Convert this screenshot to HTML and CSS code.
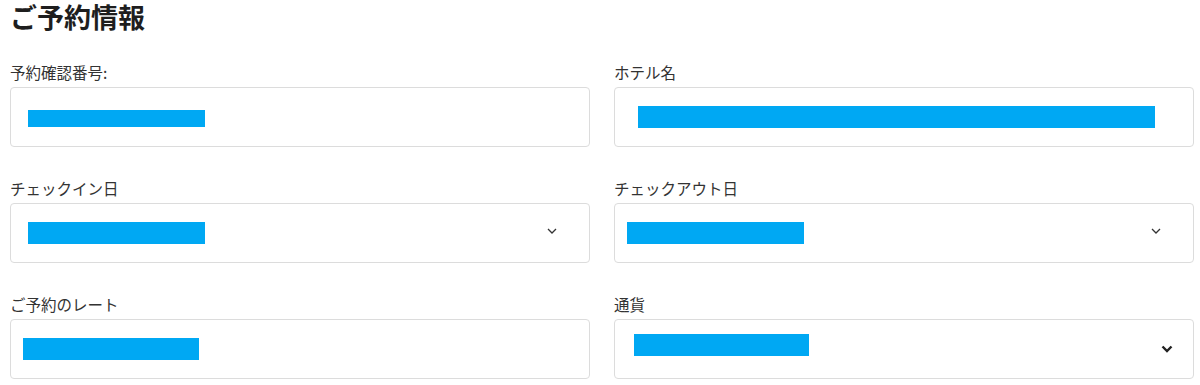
FILE: index.html
```html
<!DOCTYPE html>
<html lang="ja">
<head>
  <meta charset="UTF-8" />
  <meta name="viewport" content="width=device-width, initial-scale=1.0"/>
  <title>ご予約情報</title>
  <link rel="stylesheet" href="styles.css">
</head>
<body>
  <div class="booking">
    <h1 class="booking-title">ご予約情報</h1>
    <div class="field-grid">
      <div class="field">
        <label class="field-label">予約確認番号:</label>
        <div class="field-box">
          <span class="redact bar-number"></span>
        </div>
      </div>
      <div class="field">
        <label class="field-label">ホテル名</label>
        <div class="field-box">
          <span class="redact bar-hotel"></span>
        </div>
      </div>
      <div class="field">
        <label class="field-label">チェックイン日</label>
        <div class="field-box">
          <span class="redact"></span>
          <svg class="chevron" width="10" height="6" viewBox="0 0 10 6">
            <path d="M1 1 L5 5 L9 1" fill="none" stroke="#333" stroke-width="1.3"/>
          </svg>
        </div>
      </div>
      <div class="field">
        <label class="field-label">チェックアウト日</label>
        <div class="field-box">
          <span class="redact bar-checkout"></span>
          <svg class="chevron" width="10" height="6" viewBox="0 0 10 6">
            <path d="M1 1 L5 5 L9 1" fill="none" stroke="#333" stroke-width="1.3"/>
          </svg>
        </div>
      </div>
      <div class="field">
        <label class="field-label">ご予約のレート</label>
        <div class="field-box">
          <span class="redact bar-rate"></span>
        </div>
      </div>
      <div class="field">
        <label class="field-label">通貨</label>
        <div class="field-box">
          <span class="redact bar-currency"></span>
          <svg class="chevron chevron-bold" width="12" height="8" viewBox="0 0 12 8">
            <path d="M1.5 1.5 L6 6 L10.5 1.5" fill="none" stroke="#222" stroke-width="2.4"/>
          </svg>
        </div>
      </div>
    </div>
  </div>
</body>
</html>
```

FILE: styles.css
```css
body {
  margin: 0;
  padding: 0 6px 0 10px;
  font-family: "Noto Sans CJK JP", "Noto Sans", sans-serif;
  background: #fff;
  color: #333;
}
.booking-title {
  margin: 0;
  font-size: 27px;
  line-height: 34px;
  font-weight: 700;
  color: #1e1e1e;
}
.field-grid {
  display: grid;
  grid-template-columns: 580px 580px;
  column-gap: 24px;
  row-gap: 31px;
  margin-top: 28px;
}
.field-label {
  display: block;
  font-size: 15.5px;
  line-height: 20px;
  margin-bottom: 5px;
  color: #333;
}
.field-box {
  display: flex;
  align-items: center;
  justify-content: space-between;
  box-sizing: border-box;
  height: 60px;
  padding: 0 32px 0 17px;
  border: 1px solid #dcdcdc;
  border-radius: 4px;
  background: #fff;
}
.redact {
  display: block;
  width: 177px;
  height: 22px;
  background: #00a8f3;
}
.bar-number {
  height: 17px;
  margin-top: 3px;
}
.bar-hotel {
  width: 517px;
  margin-left: 6px;
}
.bar-checkout {
  margin-left: -5px;
}
.bar-rate {
  width: 176px;
  margin-left: -5px;
}
.bar-currency {
  width: 175px;
  margin-left: 2px;
  margin-top: -8px;
}
.chevron {
  display: block;
  margin-top: -4px;
}
.chevron-bold {
  margin-top: 0;
  margin-right: -12px;
}
```
